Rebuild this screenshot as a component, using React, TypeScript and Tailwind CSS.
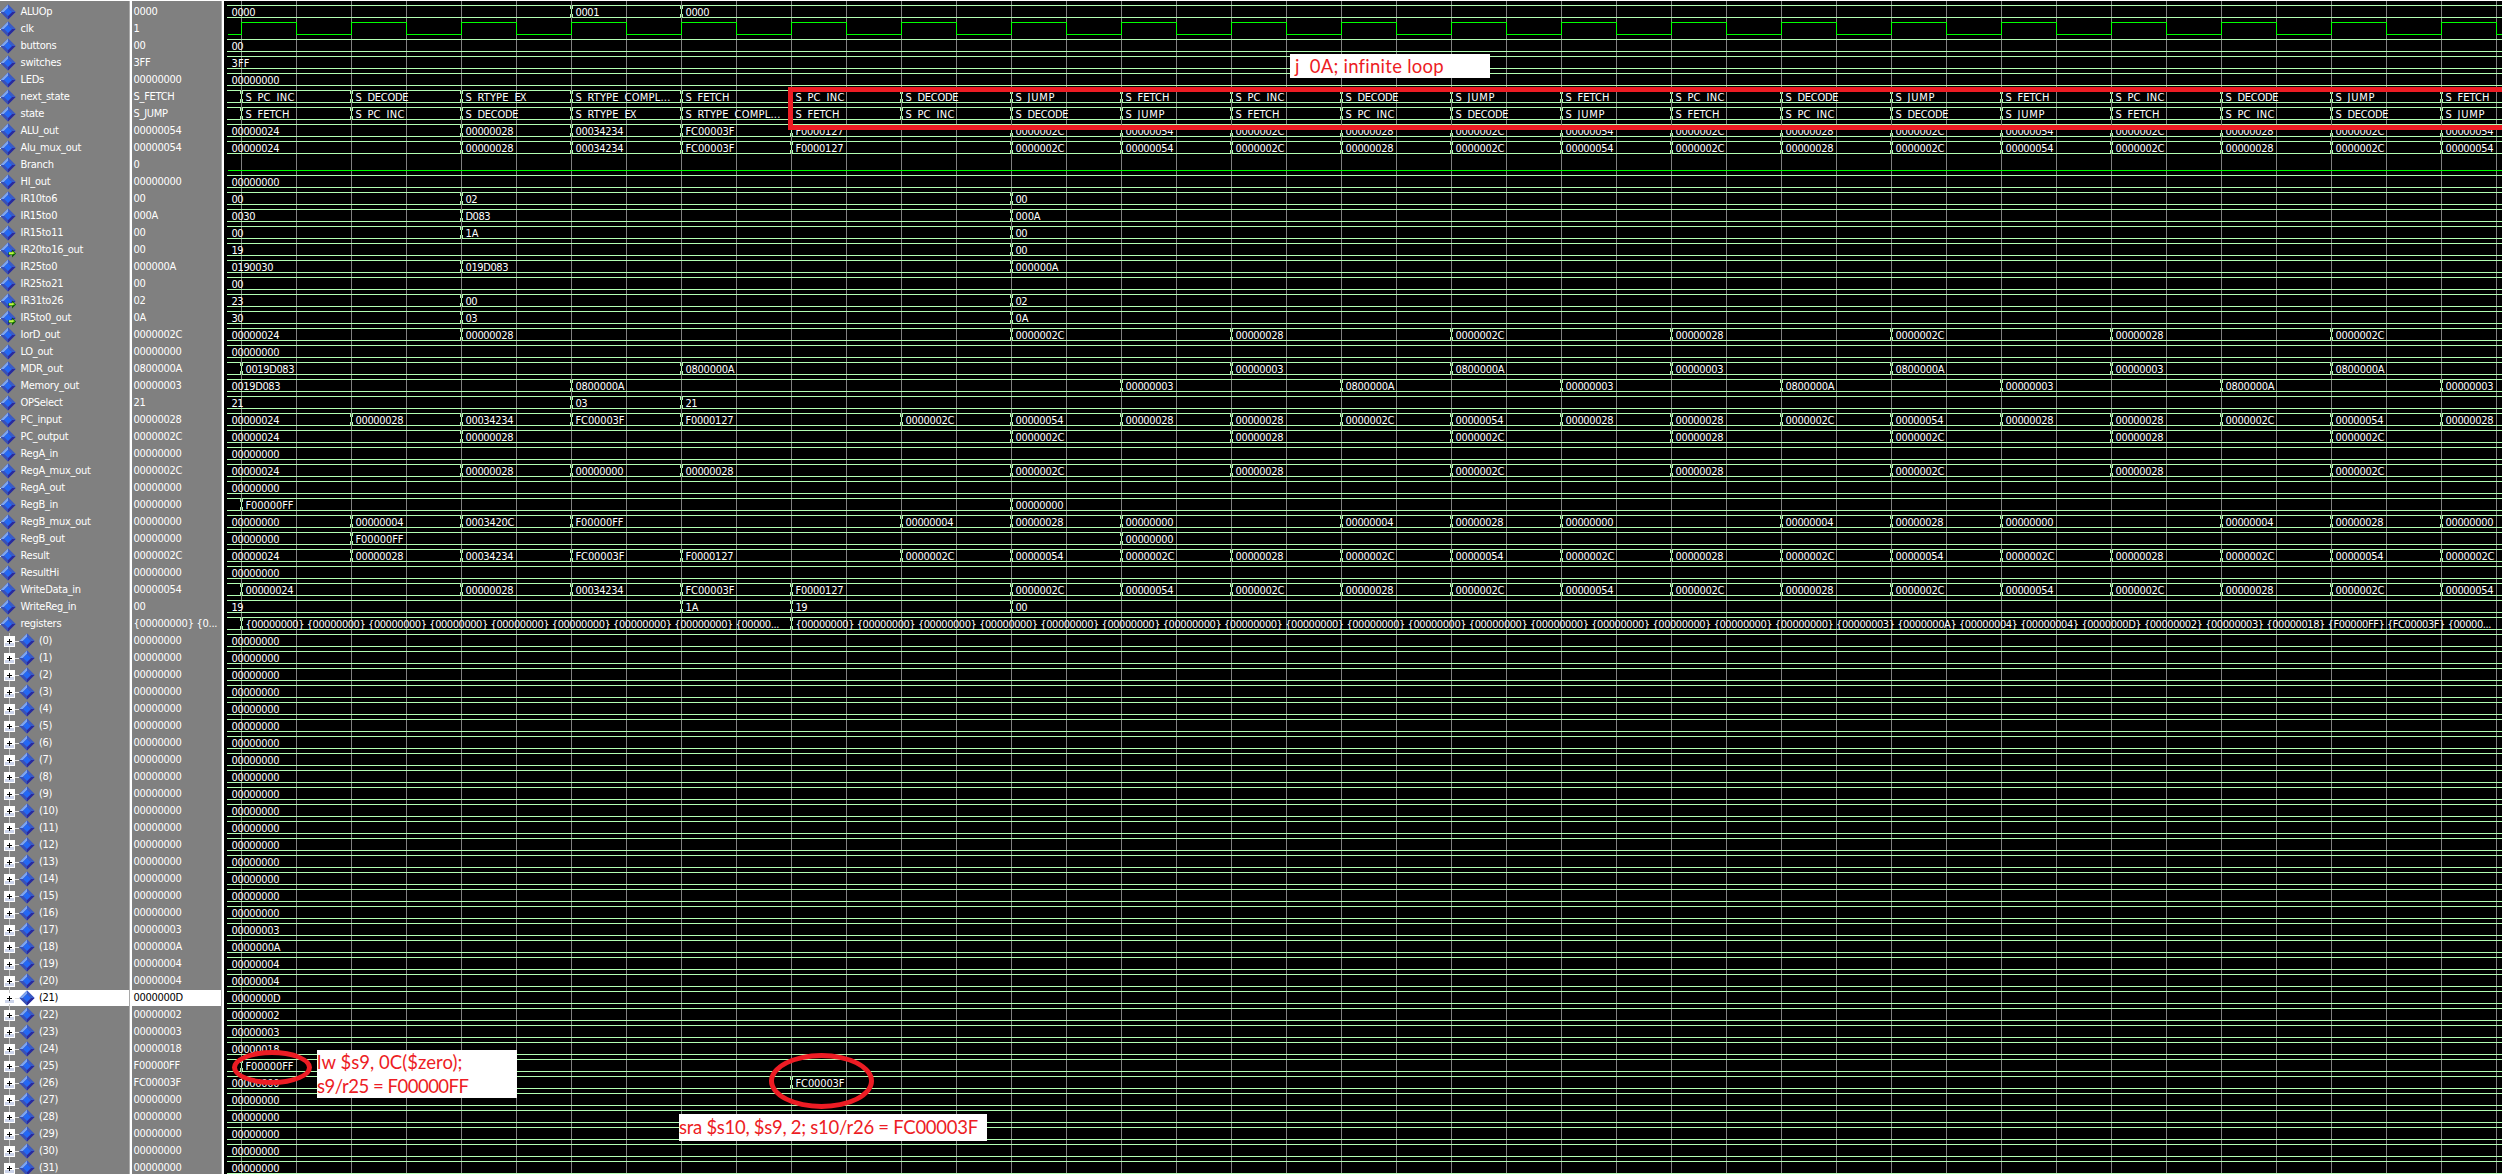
import React from "react";

type Change = [number, string];
interface Signal {
  name: string;
  value: string;
  initial?: string;
  changes?: Change[];
  kind?: "clock" | "low";
  output?: boolean;
  child?: boolean;
  selected?: boolean;
}

const PITCH = 17;
const WIDTH = 2502;
const WAVE_X = 224;
const LAST = 20;
const tick = (j: number) => 241 + 110 * j;

const Z = "00000000";
const hex = (s: string) => s.padStart(8, "0");

function cycle(start: number, values: string[], step = 1): Change[] {
  const out: Change[] = [];
  for (let j = start, i = 0; j <= LAST; j += step, i++) out.push([j, values[i % values.length]]);
  return out;
}

const C24 = hex("24");
const C28 = hex("28");
const C2C = hex("2C");
const C54 = hex("54");
const C34 = "00034234";
const FC = "FC00003F";
const F127 = "F0000127";
const F0 = "F00000FF";
const JMP = "0800000A";

const aluCycle: Change[] = [[2, C28], [3, C34], [4, FC], [5, F127], ...cycle(7, [C2C, C54, C2C, C28])];
const pcCycle: Change[] = [[2, C28], ...cycle(7, [C2C, C28], 2)];

const registerValues = [
  ...Array(17).fill(Z), hex("3"), hex("A"), hex("4"), hex("4"), hex("D"), hex("2"), hex("3"), hex("18"), F0, FC, Z, Z, Z, Z, Z,
] as string[];
const wrap = (s: string) => `{${s}}`;
const regsShort = Array(8).fill(wrap(Z)).join(" ") + " {00000...";
const regsLong = registerValues.slice(0, 27).map(wrap).join(" ") + " {00000...";

const signals: Signal[] = [
  { name: "ALUOp", value: "0000", initial: "0000", changes: [[3, "0001"], [4, "0000"]] },
  { name: "clk", value: "1", kind: "clock" },
  { name: "buttons", value: "00", initial: "00" },
  { name: "switches", value: "3FF", initial: "3FF" },
  { name: "LEDs", value: Z, initial: Z },
  {
    name: "next_state", value: "S_FETCH",
    changes: [[0, "S PC INC"], [1, "S DECODE"], [2, "S RTYPE EX"], [3, "S RTYPE COMPL..."], [4, "S FETCH"],
      ...cycle(5, ["S PC INC", "S DECODE", "S JUMP", "S FETCH"])],
  },
  {
    name: "state", value: "S_JUMP",
    changes: [[0, "S FETCH"], [1, "S PC INC"], [2, "S DECODE"], [3, "S RTYPE EX"], [4, "S RTYPE COMPL..."],
      ...cycle(5, ["S FETCH", "S PC INC", "S DECODE", "S JUMP"])],
  },
  { name: "ALU_out", value: C54, initial: C24, changes: aluCycle },
  { name: "Alu_mux_out", value: C54, initial: C24, changes: aluCycle },
  { name: "Branch", value: "0", kind: "low" },
  { name: "HI_out", value: Z, initial: Z },
  { name: "IR10to6", value: "00", initial: "00", changes: [[2, "02"], [7, "00"]] },
  { name: "IR15to0", value: "000A", initial: "0030", changes: [[2, "D083"], [7, "000A"]] },
  { name: "IR15to11", value: "00", initial: "00", changes: [[2, "1A"], [7, "00"]] },
  { name: "IR20to16_out", value: "00", initial: "19", changes: [[7, "00"]], output: true },
  { name: "IR25to0", value: "000000A", initial: "0190030", changes: [[2, "019D083"], [7, "000000A"]] },
  { name: "IR25to21", value: "00", initial: "00" },
  { name: "IR31to26", value: "02", initial: "23", changes: [[2, "00"], [7, "02"]], output: true },
  { name: "IR5to0_out", value: "0A", initial: "30", changes: [[2, "03"], [7, "0A"]], output: true },
  { name: "IorD_out", value: C2C, initial: C24, changes: pcCycle },
  { name: "LO_out", value: Z, initial: Z },
  { name: "MDR_out", value: JMP, changes: [[0, "0019D083"], [4, JMP], ...cycle(9, [hex("3"), JMP], 2)] },
  { name: "Memory_out", value: hex("3"), initial: "0019D083", changes: [[3, JMP], ...cycle(8, [hex("3"), JMP], 2)] },
  { name: "OPSelect", value: "21", initial: "21", changes: [[3, "03"], [4, "21"]] },
  {
    name: "PC_input", value: C28, initial: C24,
    changes: [[1, C28], [2, C34], [3, FC], [4, F127], ...cycle(6, [C2C, C54, C28, C28])],
  },
  { name: "PC_output", value: C2C, initial: C24, changes: pcCycle },
  { name: "RegA_in", value: Z, initial: Z },
  { name: "RegA_mux_out", value: C2C, initial: C24, changes: [[2, C28], [3, Z], [4, C28], ...cycle(7, [C2C, C28], 2)] },
  { name: "RegA_out", value: Z, initial: Z },
  { name: "RegB_in", value: Z, changes: [[0, F0], [7, Z]] },
  {
    name: "RegB_mux_out", value: Z, initial: Z,
    changes: [[1, hex("4")], [2, "0003420C"], [3, F0],
      ...cycle(6, [hex("4"), C28, Z, ""]).filter(([, v]) => v !== "")],
  },
  { name: "RegB_out", value: Z, initial: Z, changes: [[1, F0], [8, Z]] },
  {
    name: "Result", value: C2C, initial: C24,
    changes: [[1, C28], [2, C34], [3, FC], [4, F127], ...cycle(6, [C2C, C54, C2C, C28])],
  },
  { name: "ResultHi", value: Z, initial: Z },
  { name: "WriteData_in", value: C54, changes: [[0, C24], ...aluCycle] },
  { name: "WriteReg_in", value: "00", initial: "19", changes: [[4, "1A"], [5, "19"], [7, "00"]] },
  { name: "registers", value: "{00000000} {0...", changes: [[0, regsShort], [5, regsLong]] },
  ...registerValues.map((v, i): Signal => ({
    name: `(${i})`,
    value: v,
    child: true,
    selected: i === 21,
    initial: i === 25 ? undefined : i === 26 ? Z : v,
    changes: i === 25 ? [[0, F0]] : i === 26 ? [[5, FC]] : [],
  })),
];

/* Advance widths in pixels of the 11px interface font. */
const ADVANCE: Record<string, number> = {
  A: 7, B: 6, C: 7, D: 7, E: 6, F: 6, G: 7, H: 7, I: 4, J: 5, L: 5, M: 9, N: 7, O: 8, P: 6, R: 7, S: 6, T: 6, U: 7,
  X: 6, Y: 6, W: 10, "{": 5, "}": 5, " ": 3, ".": 3.6, _: 6,
};
const measure = (s: string) => [...s].reduce((sum, ch) => sum + (ADVANCE[ch] ?? 6), 0);

const FONT = "font-['DejaVu_Sans_Condensed','DejaVu_Sans',sans-serif] [font-stretch:condensed]";

function Label({ text, x, y }: { text: string; x: number; y: number }) {
  if (text[0] === "S") {
    let cx = x;
    return (
      <>
        {text.split(" ").map((word, i) => {
          const at = cx;
          cx += measure(word) + 6;
          return (
            <text key={i} x={at} y={y} textLength={measure(word)}>{word}</text>
          );
        })}
      </>
    );
  }
  return <text x={x} y={y} textLength={measure(text)}>{text}</text>;
}

function Bus({ signal, row }: { signal: Signal; row: number }) {
  const top = 5 + row * PITCH;
  const bottom = top + 12;
  const changes = signal.changes ?? [];
  const edges = [227, ...changes.map(([j]) => tick(j)), WIDTH + 2];
  let d = "";
  for (let i = 0; i < edges.length - 1; i++) {
    const a = i === 0 ? edges[0] : edges[i] + 1;
    const b = edges[i + 1];
    d += `M${a} ${top + 0.5}H${b}M${a} ${bottom + 0.5}H${b}`;
    if (i > 0) {
      const e = edges[i];
      d += `M${e - 0.5} ${top + 1}v3M${e + 1.5} ${top + 1}v3M${e + 0.5} ${top + 4}v5M${e - 0.5} ${bottom - 3}v3M${e + 1.5} ${bottom - 3}v3`;
    }
  }
  return (
    <g>
      <path d={d} stroke="#b3ffb3" fill="none" shapeRendering="crispEdges" />
      <g fill="#fff">
        {signal.initial && <Label text={signal.initial} x={231.5} y={top + 11} />}
        {changes.map(([j, v]) => <Label key={j} text={v} x={tick(j) + 4.5} y={top + 11} />)}
      </g>
    </g>
  );
}

function clockPath() {
  let d = "M228 34.5H241.5";
  for (let x = 241.5; x < WIDTH; x += 110) d += `V22.5H${x + 55}V34.5H${x + 110}`;
  return d;
}

function Waves() {
  return (
    <svg className={`block h-[1174px] w-[2278px] text-[11px] ${FONT}`} viewBox="224 0 2278 1174">
      <rect x={WAVE_X} y={1} width={2278} height={1173} fill="#000" />
      <path
        d={Array.from({ length: 42 }, (_, i) => `M${241.5 + 55 * i} 1V1174`).join("")}
        stroke="#808080"
        shapeRendering="crispEdges"
      />
      {signals.map((s, row) => {
        if (s.kind === "clock") return <path key={row} d={clockPath()} stroke="#0f0" fill="none" shapeRendering="crispEdges" />;
        if (s.kind === "low") return <path key={row} d={`M228 ${17.5 + row * PITCH}H2502`} stroke="#0f0" shapeRendering="crispEdges" />;
        return <Bus key={row} signal={s} row={row} />;
      })}
    </svg>
  );
}

function Diamond({ output }: { output?: boolean }) {
  return (
    <svg className="-mt-px h-4 w-4 shrink-0" viewBox="0 0 16 16">
      <path d="M8 .5L15.5 8L8 15.5L.5 8Z" fill="#2f46b8" />
      <path d="M8 .5L.5 8H4L8 4Z" fill="#7fa6ee" />
      <path d="M8 .5L15.5 8H12L8 4Z" fill="#3c5cc4" />
      <path d="M.5 8L8 15.5V12L4 8Z" fill="#3a50b4" />
      <path d="M15.5 8L8 15.5V12L12 8Z" fill="#2a2a9c" />
      <path d="M8 4L12 8L8 12L4 8Z" fill="#2468f4" />
      {output && (
        <>
          <path d="M8.500 10H12V7.500L16 11.500L12 15.500V13H8.500Z" fill="#0a5a0a" />
          <path d="M9 10.500H12.500V9L15 11.300L12.500 12.500H9Z" fill="#8be81e" />
          <path d="M9 10.500H13V11.500H9Z" fill="#f4ff7a" />
        </>
      )}
    </svg>
  );
}

function Expander() {
  return (
    <svg className="h-4 w-4 shrink-0 overflow-visible" viewBox="0 0 16 16" shapeRendering="crispEdges">
      <path d="M9.500 0V17" stroke="#c8c8c8" strokeWidth="1" />
      <path d="M14 8.500H16" stroke="#e0e0e0" />
      <rect x="4" y="3" width="11" height="11" fill="#fff" />
      <path d="M5 13H14V10H5Z" fill="#ccd4ea" />
      <path d="M7 8.500H12M9.500 6V11" stroke="#000" />
    </svg>
  );
}

function NameRow({ signal }: { signal: Signal }) {
  const tone = signal.selected ? "text-black" : "text-white";
  return (
    <div className={`mb-px flex h-4 items-center whitespace-nowrap ${tone}`}>
      {signal.child ? (
        <div className={`flex h-4 w-[129px] items-center ${signal.selected ? "bg-white" : ""}`}>
          <Expander />
          <span className="h-px w-[3px] bg-[#e0e0e0]" />
          <Diamond />
          <span className="pl-1 leading-4">{signal.name}</span>
        </div>
      ) : (
        <>
          <span className="-mr-px h-px w-px bg-white" />
          <Diamond output={signal.output} />
          <span className="pl-[4.5px] leading-4">{signal.name}</span>
        </>
      )}
    </div>
  );
}

function ValueRow({ signal }: { signal: Signal }) {
  return (
    <div
      className={`mb-px h-4 whitespace-pre pl-[1.500px] leading-4 ${signal.selected ? "bg-white text-black" : "text-white"}`}
    >
      {signal.value}
    </div>
  );
}

function Note({ className, lines }: { className: string; lines: [string, string][] }) {
  return (
    <div className={`absolute whitespace-pre bg-white font-['Lato',sans-serif] text-[18.500px] leading-6 text-[#ed1c24] ${className}`}>
      {lines.map(([text, spacing]) => (
        <div key={text} className={spacing}>{text}</div>
      ))}
    </div>
  );
}

export default function App() {
  return (
    <div className="relative h-[1174px] w-[2502px] overflow-hidden bg-white">
      <div className="flex h-full">
        <div className={`mt-px flex h-[1173px] bg-[#808080] text-[11px] tracking-[-0.28px] ${FONT}`}>
          <div className="w-[129px] overflow-hidden pt-[3px]">
            {signals.map((s, i) => <NameRow key={i} signal={s} />)}
          </div>
          <div className="w-px bg-[#a8a8a8]" />
          <div className="w-[2px] bg-white" />
          <div className="w-[89px] overflow-hidden pt-[3px]">
            {signals.map((s, i) => <ValueRow key={i} signal={s} />)}
          </div>
          <div className="w-px bg-[#a8a8a8]" />
          <div className="w-[2px] bg-white" />
        </div>
        <Waves />
      </div>

      <div className="absolute left-[788px] top-[87px] h-[43px] w-[1730px] border-5 border-[#ed1c24]" />
      <div className="absolute left-[232px] top-[1050px] h-[35px] w-[80px] rounded-[50%] border-5 border-[#ed1c24]" />
      <div className="absolute left-[769px] top-[1053px] h-[56px] w-[105px] rounded-[50%] border-5 border-[#ed1c24]" />

      <Note className="left-[1290px] top-[54px] h-6 w-[200px] pl-[5px]" lines={[["j  0A; infinite loop", "tracking-[0.25px]"]]} />
      <Note
        className="left-[317px] top-[1050px] h-12 w-[200px]"
        lines={[["lw $s9, 0C($zero);", "tracking-[0.05px]"], ["s9/r25 = F00000FF", "tracking-[-0.5px]"]]}
      />
      <Note className="left-[679px] top-[1114px] h-[27px] w-[308px] pt-px" lines={[["sra $s10, $s9, 2; s10/r26 = FC00003F", "tracking-[-0.28px]"]]} />
    </div>
  );
}
